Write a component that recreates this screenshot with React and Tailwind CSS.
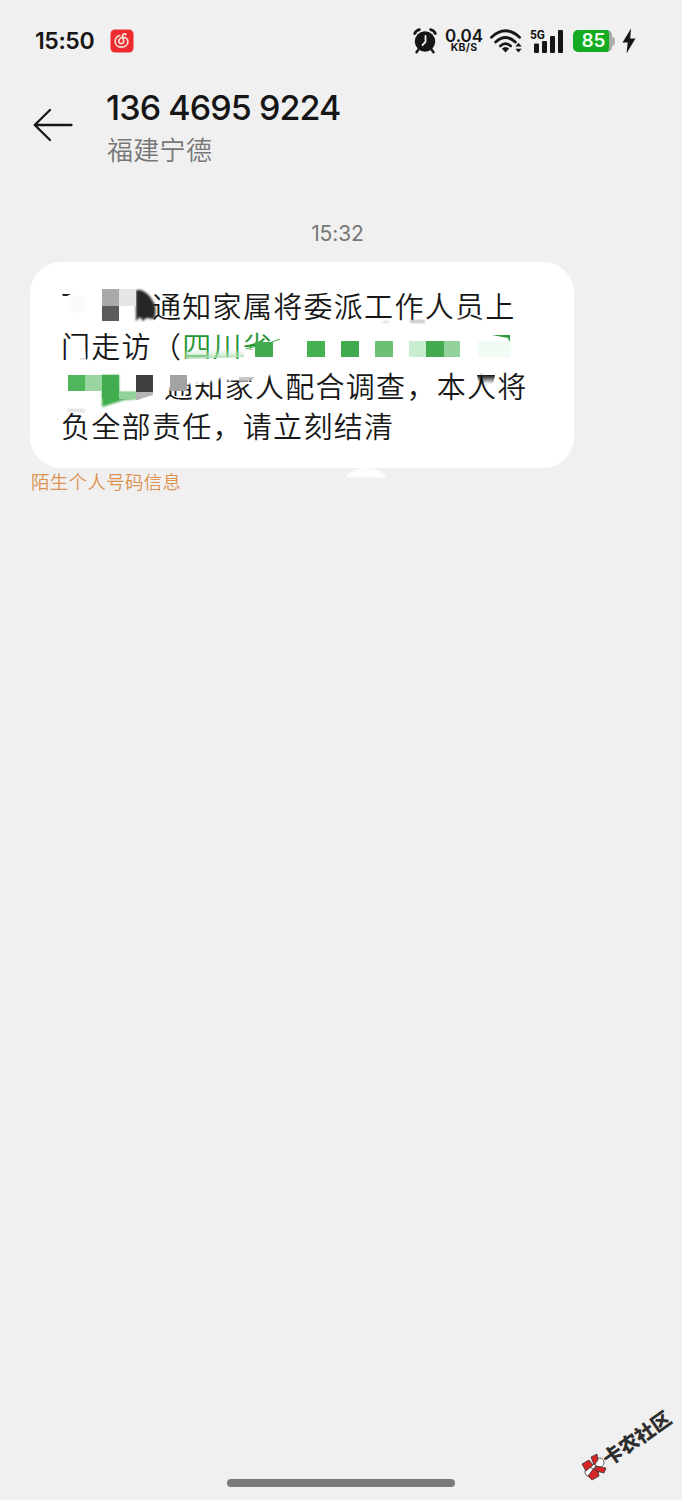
import React from 'react';

const cjk = "font-['Noto_Sans_CJK_SC',sans-serif]";

// Mosaic blocks over the hidden words, in bubble coordinates
const mosaic = [
  { x: 72, y: 27, w: 17, h: 17, fill: '#a9a9a9' },
  { x: 72, y: 44, w: 17, h: 15, fill: '#5b5b5b' },
  { x: 89, y: 27, w: 17, h: 17, fill: '#e6e6e6' },
  { x: 225, y: 80, w: 18, h: 15, fill: '#43aa4f' },
  { x: 277, y: 79, w: 18, h: 16, fill: '#45b052' },
  { x: 311, y: 79, w: 18, h: 16, fill: '#41aa4e' },
  { x: 345, y: 79, w: 18, h: 16, fill: '#6cbf75' },
  { x: 379, y: 79, w: 17, h: 16, fill: '#c8ecce' },
  { x: 396, y: 79, w: 18, h: 16, fill: '#43aa50' },
  { x: 414, y: 79, w: 16, h: 16, fill: '#94d29c' },
  { x: 448, y: 79, w: 33, h: 16, fill: '#f1fdf4' },
  { x: 38, y: 113, w: 17, h: 16, fill: '#50b65c' },
  { x: 55, y: 113, w: 17, h: 16, fill: '#9ad5a1' },
  { x: 106, y: 113, w: 17, h: 17, fill: '#404040' },
  { x: 140, y: 113, w: 17, h: 16, fill: '#a3a3a3' },
];

const NeteaseIcon = () => (
  <svg width="24" height="24" viewBox="0 0 24 24" fill="none">
    <rect x="0.5" y="0.5" width="23" height="23" rx="4.5" fill="#ee2b2f" />
    <path
      d="M9.700 6.500C6.500 7.500 4.900 10 5.100 12.800c.3 3.300 3.200 5.500 6.600 5.400 3.700-.1 6.200-2.600 6.200-5.600 0-2.500-1.900-4.300-4.500-4.300-2.500 0-4.500 1.500-4.500 3.600 0 1.700 1.100 2.700 2.500 2.700 1.600 0 2.500-1.200 2.200-2.600L12.600 6.800c-.3-1.900 1.800-2.500 3.400-1.300"
      stroke="#fbe0d5"
      strokeWidth="1.700"
      strokeLinecap="round"
    />
  </svg>
);

const AlarmIcon = () => (
  <svg width="24" height="26" viewBox="0 0 24 26" fill="none">
    <circle cx="12" cy="13.500" r="10.200" fill="#161616" />
    <path d="M1.700 5.500Q3 2.500 6.300 1.700M22.300 5.500Q21 2.500 17.700 1.700" stroke="#161616" strokeWidth="2.800" strokeLinecap="round" />
    <path d="M5.500 21.500l-2 2.700M18.500 21.500l2 2.700" stroke="#161616" strokeWidth="2.400" strokeLinecap="round" />
    <path d="M12.500 8v6l-3 3" stroke="#f0f0f0" strokeWidth="1.800" strokeLinecap="round" />
  </svg>
);

const WifiIcon = () => (
  <svg width="32" height="24" viewBox="0 0 32 24" fill="none">
    <path d="M1.500 8.200Q15.500-4.500 29.500 8.200" stroke="#161616" strokeWidth="2.900" strokeLinecap="round" />
    <path d="M5.700 13Q15.500 4.200 25.300 13" stroke="#161616" strokeWidth="2.900" strokeLinecap="round" />
    <path d="M10.300 17Q15.500 12.300 20.700 17" stroke="#161616" strokeWidth="2.600" strokeLinecap="round" />
    <path d="M11.800 19.500Q15.500 16.500 19.200 19.500L15.500 23.500Z" fill="#161616" />
    <path d="M25.300 17.600l3.200-3.800 3.200 3.800zM25.300 19.700l3.200 3.800 3.200-3.800z" fill="#161616" />
  </svg>
);

const SignalIcon = () => (
  <svg className="overflow-visible" width="34" height="28" viewBox="0 -1 34 28">
    <text x="0" y="11" fontFamily="Roboto, sans-serif" fontWeight="700" fontSize="12.500" textLength="15" lengthAdjust="spacingAndGlyphs" fill="#161616">5G</text>
    <rect x="4" y="15.500" width="5" height="9.500" rx="1" fill="#161616" />
    <rect x="12" y="13" width="5" height="12" rx="1" fill="#161616" />
    <rect x="20" y="8" width="5" height="17" rx="1" fill="#161616" />
    <rect x="28" y="2" width="5" height="23" rx="1" fill="#161616" />
  </svg>
);

const StatusBar = () => (
  <div className="flex h-[82px] items-center pl-[35px] pr-[46px] text-[#161616]">
    <span className="w-[74.500px] font-['Inter',sans-serif] text-[23px] leading-none font-semibold tracking-[-0.4px]">15:50</span>
    <NeteaseIcon />
    <div className="ml-auto flex items-center">
      <AlarmIcon />
      <div className="ml-2 w-[38px] text-center font-['Inter',sans-serif] font-semibold">
        <div className="text-[17px] leading-[13px] tracking-[-0.1px]">0.04</div>
        <div className="text-[10.500px] leading-[10px] font-bold tracking-[0.3px]">KB/S</div>
      </div>
      <div className="ml-[7px]"><WifiIcon /></div>
      <div className="ml-[8px]"><SignalIcon /></div>
      <div className="ml-[9px] flex items-center">
        <div className="flex h-[22px] w-[39px] items-center justify-center rounded-[5px] border-r-[3px] border-[#9fb0a0] bg-[#14ab22] pl-[5px] font-['Inter',sans-serif] text-[19px] font-semibold text-[#f2fff0]">85</div>
        <div className="h-[9px] w-[3px] rounded-r-sm bg-[#b0b0b4]" />
      </div>
      <svg className="ml-[7px]" width="14" height="26" viewBox="0 0 14 26">
        <path d="M9 .5L.5 14.500h5.200L4.500 25.500 13.500 10.500H8.200z" fill="#161616" />
      </svg>
    </div>
  </div>
);

const Header = () => (
  <div className="flex h-[92px] pl-[33px]">
    <svg className="mt-[26px]" width="40" height="34" viewBox="0 0 40 34" fill="none" stroke="#161616" strokeWidth="2.300" strokeLinecap="round" strokeLinejoin="round">
      <path d="M17 2L1.700 17 17 32M1.700 17H38.500" />
    </svg>
    <div className="ml-[33px] pt-[6px]">
      <div className="font-['Inter',sans-serif] text-[34px] leading-[40px] font-medium tracking-[-0.900px] whitespace-nowrap text-[#161616]">136 4695 9224</div>
      <div className={`${cjk} pl-px text-[26px] leading-[42px] font-[350] tracking-[0.3px] text-[#777]`}>福建宁德</div>
    </div>
  </div>
);

const Redaction = () => (
  <svg className="absolute top-0 left-0" width="544" height="206" viewBox="0 0 544 206">
    <defs>
      <linearGradient id="fadeUp" x1="0" y1="0" x2="0" y2="1">
        <stop offset="0" stopColor="#fff" stopOpacity="0" />
        <stop offset="1" stopColor="#fff" />
      </linearGradient>
      <linearGradient id="smear" x1="0" y1="0" x2="0" y2="1">
        <stop offset="0" stopColor="#111" />
        <stop offset="1" stopColor="#111" stopOpacity="0" />
      </linearGradient>
      <linearGradient id="greenSmear" x1="0" y1="0" x2="0" y2="1">
        <stop offset="0" stopColor="#cfeed2" stopOpacity="0" />
        <stop offset="1" stopColor="#a5d9ab" />
      </linearGradient>
      <filter id="soft"><feGaussianBlur stdDeviation="1" /></filter>
    </defs>

    {/* first line */}
    <path d="M32 32h9l-4 2h-4z" fill="#222" />
    <circle cx="47" cy="42" r="9" fill="#fafafa" />
    <path d="M106 28h5q8 3 13 13 3 7 0 16l-8-1-3 3-3-4-4 4z" fill="#262626" filter="url(#soft)" />
    <path d="M426 62v-4l12-2 14 2v4z" fill="#fff" filter="url(#soft)" />
    <path d="M380 58h15v3h-15zM350 61l8-2v2z" fill="#aaa" fillOpacity=".7" filter="url(#soft)" />

    {/* second line */}
    <path d="M48 85h8v14h-8z" fill="url(#fadeUp)" />
    <path d="M154 87h54l10 8-62 2z" fill="url(#greenSmear)" />
    <path d="M150 97h72v8h-72z" fill="#fff" />
    <path d="M214 88h12v16h-12zM225 93h25v12h-25z" fill="#fff" />
    <path d="M217 87l22-5 9-3-1 9h-22z" fill="#fff" />
    <path d="M216 87l20-6M237 82l13-5" stroke="#5fb368" strokeWidth="1.300" />
    <path d="M462 73h18v9l-2-6z" fill="#2f9c3d" />

    {/* third line */}
    <path d="M130 104h62v12l-8 3-12 2-18 2-14 3-10 1z" fill="#fff" filter="url(#soft)" />
    <path d="M192 104h64v7l-18 3-20 3-26 2z" fill="#fff" filter="url(#soft)" />
    <path d="M209 115h16l-4 4-12 2z" fill="#bbb" fillOpacity=".8" />
    <path d="M72 113h17v17h17v7l-12 1-22 7z" fill="#41ad4e" filter="url(#soft)" />
    <path d="M72 113h17v24H72z" fill="#41ad4e" />
    <path d="M89 130h17v7h-17z" fill="#91d19a" />
    <path d="M106 130h17v3l-10 3-5 2h-2z" fill="#b5b5b5" />
    <path d="M442 104h24v8l-20 3z" fill="#fff" fillOpacity=".8" />
    <path d="M447 113h18l-2 9h-14z" fill="url(#smear)" />

    {/* fourth line */}
    <path d="M38 147h17v3H38z" fill="#ddd" filter="url(#soft)" />
    {mosaic.map((b, i) => (
      <rect key={i} x={b.x} y={b.y} width={b.w} height={b.h} fill={b.fill} />
    ))}
  </svg>
);

const Message = () => (
  <div className="px-[30px]">
    <div className="relative h-[206px] w-[544px] rounded-[31px] bg-white pt-[23px] pl-[31px]">
      <div className={`${cjk} text-[29px] leading-[40px] font-[350] tracking-[1.300px] whitespace-nowrap text-[#171717]`}>
        <div className="pl-[91px]">通知家属将委派工作人员上</div>
        <div>门走访（<span className="text-[#229632]">四川省</span></div>
        <div className="pl-[103px]">通知家人配合调查，本人将</div>
        <div>负全部责任，请立刻结清</div>
      </div>
      <Redaction />
    </div>
    <div className="flex pl-px">
      <div className={`${cjk} w-[315px] text-[18.500px] leading-[26px] font-[350] tracking-[0.300px] text-[#dd9250]`}>陌生个人号码信息</div>
      <svg width="42" height="10" viewBox="0 0 42 10">
        <path d="M0 8q8-8 20-8t20 8q0 2-4 1.500H4Q0 10 0 8z" fill="#fdfdfd" />
      </svg>
    </div>
  </div>
);

const Watermark = () => (
  <svg width="102" height="92" viewBox="580 1400 102 92">
    <g stroke="#333" strokeWidth=".8">
      <circle cx="599.500" cy="1463.500" r="4.500" fill="#fff" />
      <circle cx="589.500" cy="1473" r="4.500" fill="#fff" />
      <g fill="#d92525">
        <path d="M582 1465l7-4 4 5-7 6z" />
        <path d="M591 1458l6-3 1 6-4 5z" />
        <path d="M594 1469l4 3 1 5-7 4-4-4z" />
        <path d="M595 1467l11 2-2 5-8-2z" />
      </g>
    </g>
    <circle cx="605" cy="1460" r="1" fill="#d92525" />
    <text
      transform="translate(609 1467.500) rotate(-35)"
      fontFamily="Noto Sans CJK SC, sans-serif"
      fontWeight="900"
      fontSize="19.500"
      fill="#2e2e2e"
    >
      卡农社区
    </text>
  </svg>
);

const App = () => {
  return (
    <div className="flex h-[1500px] w-[682px] flex-col overflow-hidden bg-[#f0f0f0]">
      <StatusBar />
      <Header />
      <div className="flex h-[88px] items-end justify-center pr-[7px] pb-[13px] font-['Inter',sans-serif] text-[21px] tracking-[-0.100px] text-[#777]">15:32</div>
      <Message />
      <div className="mt-auto flex justify-end"><Watermark /></div>
      <div className="-mt-3 mb-[13px] ml-[227px] h-[8px] w-[228px] rounded-full bg-[#797979]" />
    </div>
  );
};

export default App;
